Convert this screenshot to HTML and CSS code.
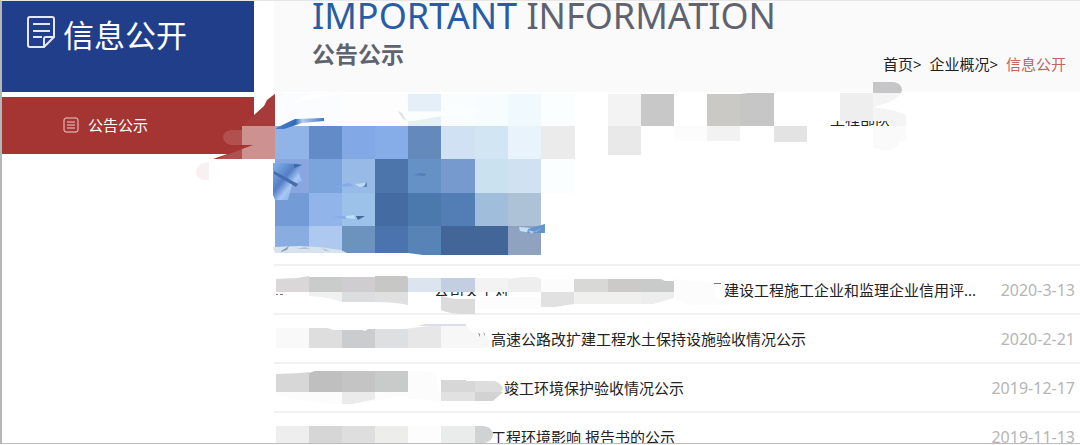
FILE: index.html
```html
<!DOCTYPE html>
<html lang="zh-CN">
<head>
<meta charset="utf-8">
<title>信息公开</title>
<link rel="stylesheet" href="styles.css">
</head>
<body>
<div class="page">
  <aside class="sidebar">
    <h2 class="sidebar-title">
      <svg class="title-icon" viewBox="0 0 28 32" aria-hidden="true"><path d="M3 1h22q2 0 2 2v18L17 31H3q-2 0-2-2V3q0-2 2-2zM27 21h-8q-2 0-2 2v8M6 8h17M6 15h17M6 21h9"/></svg>
      <span>信息公开</span>
    </h2>
    <nav>
      <a class="menu-item" href="#notice">
        <svg class="menu-icon" viewBox="0 0 16 16" aria-hidden="true"><rect x="1" y="1" width="14" height="14" rx="2"/><path d="M4 5h8M4 8h8M4 11h8"/></svg>
        <span>公告公示</span>
      </a>
    </nav>
  </aside>
  <main class="main">
    <header class="banner">
      <div>
        <h1 class="headline"><span class="accent">IMPORTANT</span> INFORMATION</h1>
        <h3 class="subhead">公告公示</h3>
      </div>
      <nav class="crumbs"><a href="#home">首页</a>&gt; <a href="#about">企业概况</a>&gt; <a class="current" href="#info">信息公开</a></nav>
    </header>
    <section class="feature"><a class="feature-title" href="#feature">工程部队</a></section>
    <ul class="list">
      <li class="row"><a class="row-title lead-a" href="#n1"><span class="part">公司关于对</span><span>建设工程施工企业和监理企业信用评...</span></a><time>2020-3-13</time></li>
      <li class="row"><a class="row-title lead-b" href="#n2">高速公路改扩建工程水土保持设施验收情况公示</a><time>2020-2-21</time></li>
      <li class="row"><a class="row-title lead-c" href="#n3">竣工环境保护验收情况公示</a><time>2019-12-17</time></li>
      <li class="row"><a class="row-title lead-b" href="#n4">工程环境影响 报告书的公示</a><time>2019-11-13</time></li>
    </ul>
  </main>
  <svg class="mosaic" viewBox="0 0 1080 445" aria-hidden="true">
    <defs>
      <linearGradient id="leaf" x2="1"><stop stop-color="#4a80d0"/><stop offset=".4" stop-color="#3469b5"/><stop offset=".55" stop-color="#b1cdf7"/><stop offset="1" stop-color="#3f78c5"/></linearGradient>
      <linearGradient id="petal" x2="1" y2="1"><stop stop-color="#83b4ea"/><stop offset=".4" stop-color="#537fc6"/><stop offset=".6" stop-color="#a8c7f4"/><stop offset="1" stop-color="#6797df"/></linearGradient>
    </defs>
    <!-- red smear -->
    <path fill="#a53c3b" d="M254 115l10-9 3-6 9-7v33h-34z"/>
    <path fill="#fff" d="M213 159l18-5h45v8h-65z"/>
    <path fill="#a53533" d="M213 159l40-14h23v14z"/>
    <path fill="#b25050" d="M242 130h-11q-8 1-8 8 2 6 8 7h11zM242 149v10h-25z"/>
    <path fill="#cd9290" d="M242 126h34v33h-34v-10l11-4h-11z"/>
    <path fill="#f8f1f2" d="M209 162q-13 2-13 10 1 8 9 8h4z"/>
    <!-- picture: pale row -->
    <path fill="#fafcff" d="M275 93h67v33h-67z"/><path fill="#fff" d="M293 103l16-9h33l-22 3z"/>
    <path fill="#fdfdfe" d="M342 93h66v33h-66z"/>
    <path fill="#e4eff8" d="M408 94h33v32h-33z"/>
    <path fill="#fafdfe" d="M441 94h34v32h-34z"/><path fill="#f7fcff" d="M475 94h33v32h-33z"/>
    <path fill="#f0f9fd" d="M508 94h33v32h-33z"/><path fill="#fbfeff" d="M541 94h34v32h-34z"/>
    <path fill="#fafefe" d="M400 111q30 1 92-1l-49 6-30 5-9 0z"/>
    <path fill="#d9e2e8" d="M398 111l4 2 3 6 4 2-6-2z"/>
    <!-- picture: second row -->
    <path fill="#91b4e8" d="M275 126h34v33h-34z"/><path fill="#628bc8" d="M309 126h33v33h-33z"/>
    <path fill="#82a8e6" d="M342 126h33v33h-33z"/><path fill="#87ade8" d="M375 126h33v33h-33z"/>
    <path fill="#648abb" d="M408 126h33v33h-33z"/><path fill="#d0e1f3" d="M441 126h34v33h-34z"/>
    <path fill="#d1e5f3" d="M475 126h33v33h-33z"/><path fill="#e9f3fb" d="M508 126h33v33h-33z"/>
    <path fill="#ebebeb" d="M541 126h34v33h-34z"/>
    <!-- picture: third row -->
    <path fill="#88a7e0" d="M275 159h34v34h-34z"/><path fill="#7ba3dc" d="M309 159h33v34h-33z"/>
    <path fill="#98bae7" d="M342 159h33v34h-33z"/><path fill="#4c76ab" d="M375 159h33v34h-33z"/>
    <path fill="#6691c7" d="M408 159h33v34h-33z"/><path fill="#769acd" d="M441 159h34v34h-34z"/>
    <path fill="#cae1ef" d="M475 159h33v34h-33z"/><path fill="#d0e1f1" d="M508 159h33v34h-33z"/>
    <path fill="#fbfefe" d="M541 159h34v34h-34z"/>
    <!-- picture: fourth row -->
    <path fill="#739bd6" d="M275 193h34v33h-34z"/><path fill="#91b5ea" d="M309 193h33v33h-33z"/>
    <path fill="#9cc2e9" d="M342 193h33v33h-33z"/><path fill="#446ca3" d="M375 193h33v33h-33z"/>
    <path fill="#4b78ad" d="M408 193h33v33h-33z"/><path fill="#537eb5" d="M441 193h34v33h-34z"/>
    <path fill="#a0bedc" d="M475 193h33v33h-33z"/><path fill="#adc2d7" d="M508 193h33v33h-33z"/>
    <!-- picture: fifth row -->
    <path fill="#89ade0" d="M275 226h34v24h-34z"/><path fill="#adc9ef" d="M309 226h33v26h-33z"/>
    <path fill="#6c92be" d="M342 226h33v27h-33z"/><path fill="#4b73ad" d="M375 226h33v27h-33z"/>
    <path fill="#5783b6" d="M408 226h33v29h-18l-15-2z"/><path fill="#426698" d="M441 226h67v29h-67z"/>
    <path fill="#8fa3c0" d="M508 226h33v29h-33z"/>
    <!-- uncovered slivers of the picture -->
    <path fill="url(#leaf)" d="M276 128l19-9 29-1v3l-22 2-18 6-8 0z"/>
    <path fill="url(#petal)" d="M273 163l30 1-5 7 4 10-10 4-4 15h-13l-2-5z"/>
    <path fill="#466cab" d="M274 171l24 13-2 3-22-13z"/><path fill="#3d6ba9" d="M294 164l8 1-8 3z"/>
    <path fill="#83a9eb" d="M333 187l16-4 5 3z"/><path fill="#bed9f6" d="M355 184l10-1 1 3-7 1z"/><path fill="#6289b7" d="M367 182v5h-4z"/>
    <path fill="#83a9eb" d="M333 217l12-1 1 3z"/><path fill="#b8e2f7" d="M346 216l8-1 1 4-9-1z"/><path fill="#416b9a" d="M356 216l9 0-7 4z"/>
    <path fill="#527fbc" d="M413 175l8-2 6 1-3 2z"/>
    <path fill="#c4e0f5" d="M519 227l12 1v5l-11-2z"/><path fill="#6593cd" d="M528 229l17-5v9l-18 0z"/><path fill="#a9cae9" d="M528 230l8 2 7-5-12 7z"/>
    <path fill="#d6e3ee" d="M273 247l26-1 20 1 22 3 6 3h-72z"/><path fill="#8c9fb1" d="M281 251l8-5-2 4-6 2z"/><path fill="#b3c3d3" d="M297 249l8-2 5 2zM322 248l8 3-5 0z"/>
    <!-- redaction over the feature title -->
    <path fill="#f3f3f3" d="M608 94h33v32h-33z"/><path fill="#c8c8c8" d="M641 94h33v32h-33z"/>
    <path fill="#e9e9e9" d="M608 126h33v29h-33z"/><path fill="#fcfcfc" d="M674 126h33v15h-33z"/>
    <path fill="#cac9c6" d="M707 94h34v32h-34z"/><path fill="#c6c6c6" d="M740 94l8-1h26v33h-34z"/>
    <path fill="#f2f2f2" d="M707 126h33v15h-33z"/><path fill="#e3e3e3" d="M774 126h33v16h-33z"/>
    <path fill="#fff" d="M810 98h95v23h-95zM810 126h95v12h-95z"/>
    <path fill="#eee" d="M840 93h33v28h-33z"/><path fill="#f4f4f4" d="M873 93h28q-5 9-28 14zM873 107q27 4 33 8v11h-17v-5h-16z"/>
    <path fill="#fafafa" d="M873 126h33v15h-7q0 10-16 9l-10-2z"/>
    <path fill="#c6c6c8" d="M873 82h19q9 0 10 8l-1 3h-28z"/>
    <!-- redaction, first row -->
    <path fill="#fff" d="M430 280h98v12h-98zM430 296h98v12h-98zM284 292h140v12h-140z"/>
    <path fill="#d9d7d8" d="M276 279l21-1 12-2v16h-33z"/><path fill="#c9cccb" d="M309 277h33v15h-33z"/><path fill="#cfcdd0" d="M342 277h33v15h-33z"/><path fill="#c7c7c5" d="M375 276h31q2 0 2 2v14h-33z"/>
    <path fill="#f0f0f0" d="M309 292h33v10q-13-5-33-6z"/><path fill="#dcddde" d="M342 292h33v10h-33z"/><path fill="#e0e0e0" d="M375 292h33v13q-13-3-33-3z"/>
    <path fill="#dce4ef" d="M408 278h33v14h-33z"/><path fill="#c3cfe1" d="M441 278h34v14h-34z"/><path fill="#f3f3f3" d="M475 278h33v14h-33z"/><path fill="#eee" d="M508 279l14-2 14 0 5 2v13h-33z"/>
    <path fill="#dbdbdb" d="M441 296l14 3h20v15h-12q-13 0-22-4z"/>
    <path fill="#fcfcfc" d="M475 297h66v12h-66zM541 279h33v13h-33zM674 279l43 4-3 14 15 4-2 4h-37l-16-6z"/>
    <path fill="#d8d8d6" d="M574 279h34v13h-34z"/><path fill="#cccac9" d="M608 279h33v13h-33z"/><path fill="#c9caca" d="M641 279h20l4 2h9v11h-33z"/>
    <path fill="#e1e1e1" d="M541 292h33v12l-19 3h-14z"/><path fill="#f0f0ee" d="M574 292h67v12h-67z"/><path fill="#ededed" d="M641 292h33v6l-21 6h-12z"/>
    <path fill="#777" d="M276 294h2v1h-2zM280 294h3v1h-3zM714 283h7v1h-7z"/>
    <!-- redaction, second row -->
    <path fill="#f9f9f9" d="M276 328h33v20h-33z"/><path fill="#dedede" d="M309 328h19l5 2h9v18h-33z"/><path fill="#cbcccd" d="M342 330h20l3 1 3-2h7v19h-33z"/><path fill="#dedfe1" d="M375 329h33v19h-33z"/><path fill="#e7e7e8" d="M404 329l16-2 21-2v23h-33v-19z"/>
    <path fill="#f7f7f7" d="M441 325h25l7 8 12 1 6 8-5 6h-45z"/><path fill="#dcdfe7" d="M418 326l7-2h41v2z"/><path fill="#888" d="M478 333l2 1v3zM483 332l2 2v2z"/>
    <!-- redaction, third row -->
    <path fill="#fcfcfc" d="M276 392h165v11q-40-10-66-2l-33 3q-45-2-66-9zM408 371h17q12 1 12 10l4 18h-33z"/>
    <path fill="#d7d7d7" d="M276 374l24-1 9-1v20h-33z"/><path fill="#bfbfbf" d="M309 373l6-2h27v21h-33z"/><path fill="#c4c4c4" d="M342 371h33v21h-33z"/><path fill="#c9cbca" d="M375 371h33v21h-33z"/>
    <path fill="#ebebeb" d="M342 392h33v7l-22 5h-11z"/>
    <path fill="#d7d7d7" d="M441 380h25v1h9v11h-34z"/><path fill="#e1e1e1" d="M441 392h34v9h-34z"/><path fill="#ddd" d="M475 381h20q7 3 8 8l-3 4h-25z"/><path fill="#d2d2d2" d="M475 392h28l-10 9h-18z"/>
    <!-- redaction, fourth row -->
    <path fill="#eee" d="M276 426h33v17h-33z"/><path fill="#d6d6d6" d="M309 426h33v17h-33z"/><path fill="#dedede" d="M342 426h33v17h-33z"/><path fill="#ededeb" d="M375 426h33v17h-33z"/><path fill="#fdfdfd" d="M408 426h33v17h-33z"/><path fill="#e9eceb" d="M441 426h34v17h-34z"/><path fill="#d1d2d4" d="M475 426h9q9 2 9 9-1 6-8 8h-10z"/>
  </svg>
</div>
</body>
</html>
```
FILE: styles.css
```css
* { box-sizing: border-box; }

body {
  margin: 0;
  background: #fff;
  color: #222;
  font-family: "Noto Sans", "Noto Sans CJK SC", sans-serif;
  font-size: 15px;
}

h1, h2, h3, ul { margin: 0; padding: 0; }
a { color: inherit; text-decoration: none; }

.page {
  position: relative;
  display: flex;
  gap: 20px;
  height: calc(100vh - 1px);
  overflow: hidden;
  border-top: 1px solid #e6e6e6;
  border-bottom: 1px solid #bdbdbd;
  border-left: 2px solid #b4b6ba;
}

.sidebar {
  flex: 0 0 252px;
  display: flex;
  flex-direction: column;
  gap: 5px;
  color: #fff;
}

.sidebar-title {
  display: flex;
  align-items: flex-start;
  gap: 8px;
  height: 91px;
  padding: 15px 0 0 25px;
  background: #213e8b;
  font: 400 31px/36px "Noto Sans CJK SC", sans-serif;
}

.title-icon, .menu-icon { fill: none; stroke: #e4e8f3; }
.title-icon { width: 28px; height: 32px; stroke-width: 2; }

.menu-item {
  display: flex;
  align-items: center;
  gap: 9px;
  height: 57px;
  padding: 0 0 2px 61px;
  background: #a53533;
}

.menu-icon { width: 16px; height: 16px; stroke: #edcfcf; }

.main { flex: 1; min-width: 0; }

.banner {
  display: flex;
  justify-content: space-between;
  height: 91px;
  padding: 0 14px 0 38px;
  background: #fafafa;
}

.headline {
  color: #5f6370;
  font-size: 36px;
  font-weight: 400;
  line-height: 30px;
  white-space: nowrap;
}

.accent { color: #285ca5; }

.subhead {
  color: #5f6370;
  font: 700 23px/44px "Noto Sans CJK SC", sans-serif;
}

.crumbs {
  align-self: flex-end;
  padding-bottom: 16px;
  line-height: 24px;
  white-space: nowrap;
}
.crumbs a + a { margin-left: 4px; }
.current { color: #bd6562; }

.feature {
  display: flex;
  justify-content: flex-end;
  height: 172px;
  padding: 16px 190px 0 0;
}

.feature-title { line-height: 22px; height: 22px; }

.list { list-style: none; }

.row {
  display: flex;
  justify-content: space-between;
  align-items: center;
  height: 49px;
  padding-right: 5px;
  border-top: 2px solid #f1f1f1;
}

.row-title { display: flex; white-space: pre; line-height: 22px; }
.part { width: 290px; }
.lead-a { padding-left: 160px; }
.lead-b { padding-left: 217px; }
.lead-c { padding-left: 230px; }

time { color: #b5b5b5; font-size: 16px; line-height: 22px; }

.mosaic {
  position: absolute;
  top: -1px;
  left: -2px;
  width: 1080px;
  height: 445px;
  pointer-events: none;
}
```
